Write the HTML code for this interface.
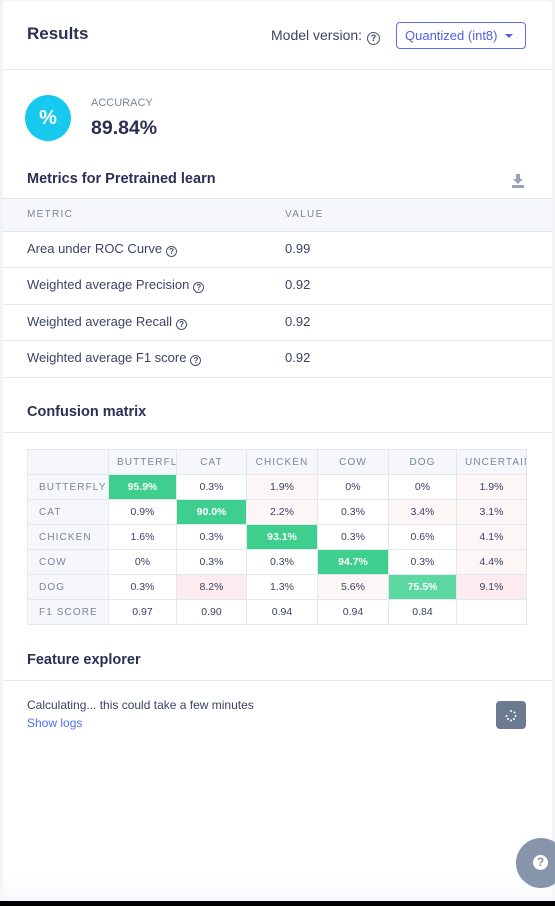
<!DOCTYPE html>
<html><head><meta charset="utf-8"><style>
*{box-sizing:border-box;margin:0;padding:0}
body{width:555px;height:906px;background:#f1f3f6;font-family:"Liberation Sans",sans-serif;color:#3b4466;position:relative;overflow:hidden}
.card{position:absolute;left:3px;top:1px;width:549px;height:900px;background:#fff;border-radius:4px}
.a{position:absolute;white-space:nowrap}
.hr{position:absolute;left:3px;width:549px;height:1px;background:#e6e9ef}
.h{font-weight:bold;color:#2b2f55}
.q{display:inline-block;width:11px;height:11px;border:1.2px solid #4a5270;border-radius:50%;font-size:8px;line-height:9px;text-align:center;font-weight:bold;vertical-align:-1px;margin-left:4px}
table{position:absolute;left:27px;top:449px;border-collapse:collapse;font-size:10.5px;color:#3b4466;table-layout:fixed}
td{border:1px solid #e3e7ee;text-align:center;height:25px;padding:0;overflow:hidden;white-space:nowrap}
td.l,tr.hd td{background:#f5f7fa;color:#7a869c;letter-spacing:1.1px;font-size:10px}
td.l{text-align:left;padding-left:11px}
.g{background:#3ecf8e;color:#fff;font-weight:bold}
.g2{background:#5cd9a2;color:#fff;font-weight:bold}
.p1{background:#fdf6f7}.p2{background:#fcecef}
</style></head><body>
<div class="card"></div>
<div class="a h" style="left:27px;top:24px;font-size:17px">Results</div>
<div class="a" style="left:271px;top:27px;font-size:14px;color:#3b4466">Model version:<span class="q" style="width:13px;height:13px;font-size:9px;line-height:11px;margin-left:5px">?</span></div>
<div class="a" style="left:396px;top:22px;width:130px;height:27px;border:1px solid #5b6ff0;border-radius:4px;color:#4f5fe8;font-size:13px;line-height:25px;padding-left:8px">Quantized (int8) <span style="display:inline-block;margin-left:4px;border-left:4px solid transparent;border-right:4px solid transparent;border-top:4px solid #4f5fe8;vertical-align:2px"></span></div>
<div class="hr" style="top:69px"></div>
<div class="a" style="left:25px;top:95px;width:46px;height:46px;border-radius:50%;background:#17c9ee;color:#fff;font-size:20px;font-weight:bold;text-align:center;line-height:46px">%</div>
<div class="a" style="left:91px;top:97px;font-size:11px;color:#7a869c">ACCURACY</div>
<div class="a h" style="left:91px;top:117px;font-size:19.5px">89.84%</div>
<div class="a h" style="left:27px;top:171px;font-size:14.5px">Metrics for Pretrained learn</div>
<svg class="a" style="left:511px;top:173px" width="14" height="15" viewBox="0 0 14 15"><path d="M5 1h4v5h3l-5 5-5-5h3z" fill="#9aa3b3"/><rect x="1" y="12" width="12" height="3" fill="#9aa3b3"/></svg>
<div class="a" style="left:3px;top:198px;width:549px;height:34px;background:#f5f7fa;border-top:1px solid #e3e7ee;border-bottom:1px solid #e3e7ee"></div>
<div class="a" style="left:27px;top:209px;font-size:10px;color:#7a869c;letter-spacing:1.3px">METRIC</div>
<div class="a" style="left:285px;top:209px;font-size:10px;color:#7a869c;letter-spacing:1.3px">VALUE</div>
<div class="a" style="left:27px;top:241px;font-size:13px">Area under ROC Curve<span class="q">?</span></div><div class="a" style="left:285px;top:241px;font-size:13px">0.99</div>
<div class="hr" style="top:267px"></div>
<div class="a" style="left:27px;top:277px;font-size:13px">Weighted average Precision<span class="q">?</span></div><div class="a" style="left:285px;top:277px;font-size:13px">0.92</div>
<div class="hr" style="top:304px"></div>
<div class="a" style="left:27px;top:314px;font-size:13px">Weighted average Recall<span class="q">?</span></div><div class="a" style="left:285px;top:314px;font-size:13px">0.92</div>
<div class="hr" style="top:340px"></div>
<div class="a" style="left:27px;top:350px;font-size:13px">Weighted average F1 score<span class="q">?</span></div><div class="a" style="left:285px;top:350px;font-size:13px">0.92</div>
<div class="hr" style="top:377px"></div>
<div class="a h" style="left:27px;top:404px;font-size:14.5px">Confusion matrix</div>
<div class="hr" style="top:432px"></div>
<table style="width:500px">
<colgroup><col style="width:81px"><col style="width:68px"><col style="width:70px"><col style="width:71px"><col style="width:71px"><col style="width:68px"><col style="width:70px"></colgroup>
<tr class="hd"><td></td><td style="text-align:left;padding-left:8px">BUTTERFLY</td><td>CAT</td><td>CHICKEN</td><td>COW</td><td>DOG</td><td style="text-align:left;padding-left:8px">UNCERTAIN</td></tr>
<tr><td class="l">BUTTERFLY</td><td class="g">95.9%</td><td>0.3%</td><td class="p1">1.9%</td><td>0%</td><td>0%</td><td class="p1">1.9%</td></tr>
<tr><td class="l">CAT</td><td>0.9%</td><td class="g">90.0%</td><td class="p1">2.2%</td><td>0.3%</td><td class="p1">3.4%</td><td class="p1">3.1%</td></tr>
<tr><td class="l">CHICKEN</td><td>1.6%</td><td>0.3%</td><td class="g">93.1%</td><td>0.3%</td><td>0.6%</td><td class="p1">4.1%</td></tr>
<tr><td class="l">COW</td><td>0%</td><td>0.3%</td><td>0.3%</td><td class="g">94.7%</td><td>0.3%</td><td class="p1">4.4%</td></tr>
<tr><td class="l">DOG</td><td>0.3%</td><td class="p2">8.2%</td><td>1.3%</td><td class="p1">5.6%</td><td class="g2">75.5%</td><td class="p2">9.1%</td></tr>
<tr><td class="l">F1 SCORE</td><td>0.97</td><td>0.90</td><td>0.94</td><td>0.94</td><td>0.84</td><td></td></tr>
</table>
<div class="a h" style="left:27px;top:652px;font-size:14.5px">Feature explorer</div>
<div class="hr" style="top:680px"></div>
<div class="a" style="left:27px;top:698px;font-size:12px">Calculating... this could take a few minutes</div>
<div class="a" style="left:27px;top:716px;font-size:12px;color:#4f6ef0">Show logs</div>
<div class="a" style="left:496px;top:701px;width:30px;height:28px;border-radius:4px;background:#6c7a90"><svg width="30" height="28"><g fill="#fff"><circle cx="15" cy="10" r="1"/><circle cx="18.5" cy="11.5" r="1"/><circle cx="19.5" cy="15" r="1"/><circle cx="18" cy="18" r="1"/><circle cx="15" cy="19.5" r="1"/><circle cx="12" cy="18" r="1"/><circle cx="10.5" cy="15" r="1"/></g></svg></div>
<div class="a" style="left:0;top:875px;width:555px;height:26px;background:linear-gradient(#fff0,#f7f8fa)"></div>
<div class="a" style="left:516px;top:838px;width:50px;height:50px;border-radius:50%;background:#8795aa"><div style="position:absolute;left:17px;top:17px;width:15px;height:15px;border-radius:50%;background:#fff;color:#8795aa;font-weight:bold;font-size:12px;line-height:15px;text-align:center">?</div></div>
<div class="a" style="left:0;top:901px;width:555px;height:5px;background:#000"></div>
</body></html>
